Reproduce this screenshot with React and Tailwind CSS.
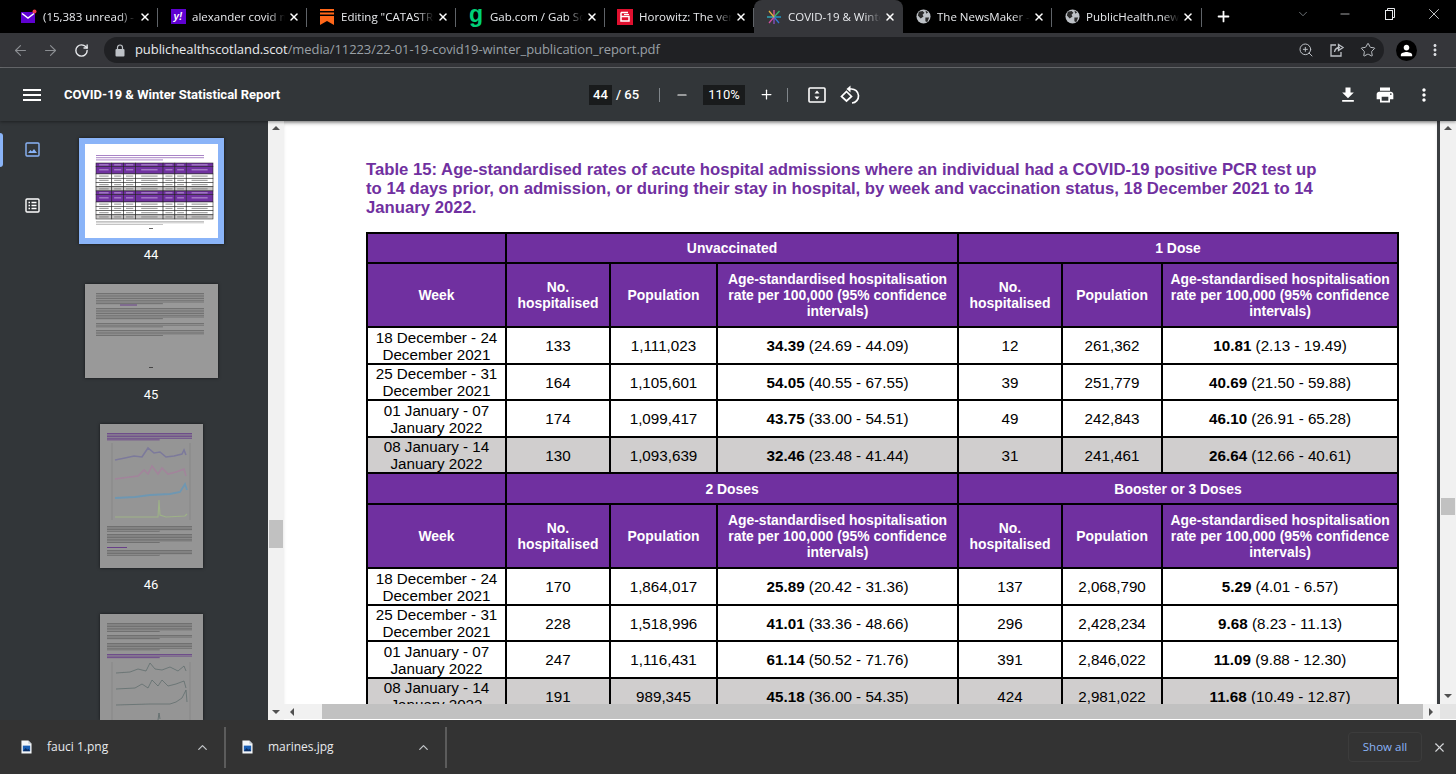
import { ArrowLeft, ArrowRight, ChevronDown, ChevronUp, Minus, Plus, RotateCw, Star, X, ZoomIn } from "lucide-react";
import { MdFileDownload, MdMenu, MdMoreVert, MdPrint, MdPerson } from "react-icons/md";

const SANS = "font-['Open_Sans','Noto_Sans',sans-serif]";

function MailIcon() {
  return (
    <svg width="16" height="16" viewBox="0 0 16 16">
      <rect x="0" y="3" width="14" height="11" fill="#5f01d1" />
      <path d="M1 4.5 L7 9 L13 4.5" fill="none" stroke="#fff" strokeWidth="1.4" />
      <circle cx="13.5" cy="2.5" r="2" fill="#f0384a" />
    </svg>
  );
}

function YahooIcon() {
  return (
    <div className="w-[15px] h-[15px] bg-[#5f01d1] flex items-center justify-center text-white text-[10px] font-bold italic leading-none font-['Liberation_Sans',sans-serif]">
      y!
    </div>
  );
}

function SubstackIcon() {
  return (
    <svg width="16" height="16" viewBox="0 0 16 16">
      <rect x="1" y="0" width="14" height="2" fill="#ff6719" />
      <rect x="1" y="3.5" width="14" height="2" fill="#ff6719" />
      <path d="M1 7 H15 V16 L8 12 L1 16 Z" fill="#ff6719" />
    </svg>
  );
}

function GabIcon() {
  return <div className="w-[15px] text-center text-[#00d178] text-[23px] font-bold leading-[16px] pb-[5px] font-['Liberation_Sans',sans-serif]">g</div>;
}

function HorowitzIcon() {
  return (
    <svg width="16" height="16" viewBox="0 0 16 16">
      <rect width="16" height="16" fill="#e0102f" />
      <path d="M4 3.5 H11 M4 3.5 V12 H12 V7.5 H4" fill="none" stroke="#fff" strokeWidth="1.5" />
      <path d="M7 5.5 H12" stroke="#fff" strokeWidth="1.2" />
    </svg>
  );
}

function SparkIcon() {
  const spokes = [
    ["#e05a9a", 8, 1, 8, 8], ["#38b36b", 13.5, 2, 8, 8], ["#1ea4d8", 15, 8, 8, 8], ["#3577d4", 13, 14, 8, 8],
    ["#8a4fc7", 8, 15, 8, 8], ["#d04f9c", 3, 14, 8, 8], ["#2fb9c9", 1, 8, 8, 8], ["#e2b23c", 3, 2, 8, 8],
  ];
  return (
    <svg width="16" height="16" viewBox="0 0 16 16">
      {spokes.map((s, i) => <line key={i} x1={s[1]} y1={s[2]} x2={s[3]} y2={s[4]} stroke={s[0]} strokeWidth="1.3" />)}
    </svg>
  );
}

function GlobeIcon() {
  return (
    <svg width="15" height="15" viewBox="0 0 16 16">
      <circle cx="8" cy="8" r="7.5" fill="#bdc1c6" />
      <path d="M3 3 L7 2 L9 4 L7 6 L8 8 L5 10 L2 7 Z M10 9 L14 9 L12 14 L10 13 Z M10 1.5 L13 3.5 L11 5 Z" fill="#2a2a2a" />
    </svg>
  );
}

const tabs = [
  { icon: <MailIcon />, title: "(15,383 unread) - alexander" },
  { icon: <YahooIcon />, title: "alexander covid new" },
  { icon: <SubstackIcon />, title: 'Editing "CATASTROPHE' },
  { icon: <GabIcon />, title: "Gab.com / Gab Social" },
  { icon: <HorowitzIcon />, title: "Horowitz: The very" },
  { icon: <SparkIcon />, title: "COVID-19 & Winter", active: true },
  { icon: <GlobeIcon />, title: "The NewsMaker - the" },
  { icon: <GlobeIcon />, title: "PublicHealth.news" },
];

function Tab({ icon, title, active, last }) {
  return (
    <div className={`relative w-[149px] h-[33px] flex items-center pl-3 pr-[7px] ${active ? "bg-[#35363a] rounded-t-lg" : ""}`}>
      <div className="w-[16px] flex items-center justify-center shrink-0">{icon}</div>
      <div className={`${SANS} ml-[6px] flex-1 overflow-hidden whitespace-nowrap text-[11.5px] text-[#e8eaed] [mask-image:linear-gradient(to_right,black_82%,transparent)]`}>{title}</div>
      <X size={12} strokeWidth={3} className="text-white ml-[3px] shrink-0" />
      {!active && !last && <div className="absolute right-0 top-[8px] w-px h-[19px] bg-[#5f6368]" />}
    </div>
  );
}

function ShareIcon() {
  return (
    <svg width="16" height="16" viewBox="0 0 16 16" fill="none" stroke="#bdc1c6" strokeWidth="1.3">
      <path d="M7 3 H2 V14 H12 V10" />
      <path d="M5.5 10 C6 7 8 5.5 11 5.5 M9.5 2.5 L14 5.5 L9.5 8.5 Z" />
    </svg>
  );
}

function RestoreIcon() {
  return (
    <svg width="12" height="12" viewBox="0 0 12 12" fill="none" stroke="#e8eaed" strokeWidth="1">
      <rect x="1.5" y="2.5" width="7" height="9" />
      <path d="M3.5 2.5 V0.5 H10.5 V9.5 H8.5" />
    </svg>
  );
}

function LockIcon() {
  return (
    <svg width="10" height="13" viewBox="0 0 10 13">
      <path d="M2.5 5 V3.5 a2.5 2.5 0 0 1 5 0 V5" fill="none" stroke="#bdc1c6" strokeWidth="1.2" />
      <rect x="0.5" y="5" width="9" height="7.5" rx="1" fill="#bdc1c6" />
    </svg>
  );
}

function FitIcon() {
  return (
    <svg width="18" height="16" viewBox="0 0 18 16">
      <rect x="1" y="1" width="16" height="14" rx="1" fill="none" stroke="#fff" strokeWidth="1.6" />
      <path d="M9 3.5 L11.5 6.5 H6.5 Z M9 12.5 L11.5 9.5 H6.5 Z" fill="#fff" />
    </svg>
  );
}

function RotateIcon() {
  return (
    <svg width="20" height="20" viewBox="0 0 20 20" fill="none" stroke="#fff" strokeWidth="1.7">
      <path d="M6.5 6.5 L11.5 11.5 L6.5 16 L1.5 11.5 Z" />
      <path d="M8.5 4 H11 A7 7 0 0 1 12 18" />
      <path d="M10.5 0.5 L6.5 4 L10.5 7.5 Z" fill="#fff" stroke="none" />
    </svg>
  );
}

function ThumbsIcon() {
  return (
    <svg width="15" height="15" viewBox="0 0 15 15">
      <rect x="1" y="1" width="13" height="13" rx="1" fill="none" stroke="#8ab4f8" strokeWidth="1.4" />
      <path d="M3 11 L5.5 8 L7 9.5 L9 7 L12 11 Z" fill="#8ab4f8" />
    </svg>
  );
}

function OutlineIcon() {
  return (
    <svg width="15" height="15" viewBox="0 0 15 15">
      <rect x="1" y="1" width="13" height="13" rx="1" fill="none" stroke="#fff" strokeWidth="1.4" />
      <path d="M3.5 4.5 H5 M3.5 7.5 H5 M3.5 10.5 H5 M6.5 4.5 H11.5 M6.5 7.5 H11.5 M6.5 10.5 H11.5" stroke="#fff" strokeWidth="1.4" />
    </svg>
  );
}

function FileIcon() {
  return (
    <svg width="11" height="14" viewBox="0 0 12 15">
      <path d="M0.5 0.5 H8 L11.5 4 V14.5 H0.5 Z" fill="#f4f6f8" />
      <path d="M8 0.5 V4 H11.5 Z" fill="#c5cdd6" />
      <rect x="2" y="6" width="8" height="6" fill="#1a5fb4" />
      <path d="M2 12 L5 8.5 L7 10.5 L8 9.5 L10 12 Z" fill="#0b2f66" />
    </svg>
  );
}

// page thumbnails: drawn miniatures, the pages are unreadable at this size
function Soft({ children }) {
  return (
    <>
      <filter id="soft"><feGaussianBlur stdDeviation="0.4" /></filter>
      <g filter="url(#soft)">{children}</g>
    </>
  );
}

function Lines({ x, y, w, n, gap = 1.7, color = "#333", h = 0.9, opacity = 0.42 }) {
  return Array.from({ length: n }).map((_, i) => (
    <rect key={i} x={x} y={y + i * gap} width={i === n - 1 ? w * 0.62 : w} height={h} fill={color} opacity={opacity} />
  ));
}

const colWidths = [139, 104, 107, 241, 104, 100, 236];
const miniRows = [30, 64, 37, 36, 37, 36, 31, 64, 37, 36, 37, 36];

function MiniTable() {
  const sx = 117 / 1031;
  const sy = 56 / 481;
  let ty = 19;
  return (
    <g>
      {miniRows.map((rh, r) => {
        const purple = r === 0 || r === 1 || r === 6 || r === 7;
        const grey = r === 5 || r === 11;
        let tx = 11;
        const y = ty;
        ty += rh * sy;
        return colWidths.map((cw, c) => {
          const x = tx;
          tx += cw * sx;
          return (
            <g key={`${r}-${c}`}>
              <rect x={x} y={y} width={cw * sx} height={rh * sy} fill={purple ? "#7030a0" : grey ? "#c9c7c7" : "#fff"} stroke="#222" strokeWidth="0.55" />
              <rect x={x + cw * sx * 0.2} y={y + rh * sy * 0.36} width={cw * sx * 0.6} height="1.2" fill={purple ? "#c9b0e0" : "#777"} opacity="0.7" />
            </g>
          );
        });
      })}
    </g>
  );
}

function Thumb44() {
  return (
    <svg width="133" height="94" viewBox="0 0 133 94" className="block">
      <rect width="133" height="94" fill="#fff" />
      <Soft>
        <Lines x={11} y={11} w={108} n={3} gap={2.2} h={1} color="#7030a0" opacity={0.6} />
        <MiniTable />
        <Lines x={11} y={77} w={108} n={3} gap={1.5} h={0.7} color="#555" opacity={0.5} />
        <rect x={64} y={84} width={4} height={1} fill="#666" />
      </Soft>
    </svg>
  );
}

function Thumb45() {
  return (
    <svg width="133" height="94" viewBox="0 0 133 94" className="block">
      <rect width="133" height="94" fill="#999" />
      <Soft>
        <Lines x={11} y={9} w={108} n={7} />
        <rect x={35} y={20.5} width={17} height={1} fill="#5c2a86" opacity="0.8" />
        <Lines x={11} y={24} w={108} n={7} />
        <Lines x={11} y={39} w={108} n={3} />
        <Lines x={11} y={46} w={108} n={4} />
        <rect x={64} y={83} width={4} height={1} fill="#444" />
      </Soft>
    </svg>
  );
}

function Thumb46() {
  return (
    <svg width="103" height="144" viewBox="0 0 103 144" className="block">
      <rect width="103" height="144" fill="#959595" />
      <Soft>
        <Lines x={7} y={9} w={85} n={5} gap={1.6} color="#5c2a86" opacity={0.75} />
        <path d="M12 19 V96 M90 19 V96" stroke="#808080" strokeWidth="0.6" />
        <polyline points="15,36 25,34 34,32 42,33 48,24 54,29 60,28 66,33 74,32 82,30 84,26 86,31" fill="none" stroke="#77739c" strokeWidth="1.6" opacity="0.8" />
        <polyline points="15,55 30,53 38,52 44,46 48,50 52,42 58,50 62,44 68,50 76,48 84,45 86,52" fill="none" stroke="#a5809c" strokeWidth="1.6" opacity="0.8" />
        <polyline points="15,74 35,73 50,71 70,70 80,68 85,60 87,66" fill="none" stroke="#6a97b5" strokeWidth="1.8" opacity="0.9" />
        <polyline points="15,93 58,93 59,76 60,91 66,93 85,92 87,90" fill="none" stroke="#9fb585" strokeWidth="1.1" opacity="0.9" />
        <Lines x={7} y={102} w={85} n={4} gap={1.6} />
        <Lines x={7} y={110} w={85} n={6} gap={1.6} />
        <rect x={7} y={123} width={20} height={1} fill="#5c2a86" opacity="0.8" />
        <Lines x={7} y={126} w={85} n={4} gap={1.6} />
      </Soft>
    </svg>
  );
}

function Thumb47() {
  return (
    <svg width="103" height="106" viewBox="0 0 103 106" className="block">
      <rect width="103" height="106" fill="#959595" />
      <Soft>
        <Lines x={7} y={9} w={85} n={6} gap={1.6} />
        <Lines x={7} y={21} w={85} n={3} gap={1.6} />
        <Lines x={7} y={29} w={85} n={5} gap={1.6} />
        <Lines x={7} y={40} w={85} n={3} gap={1.6} color="#5c2a86" opacity={0.75} />
        <path d="M12 48 V106 M90 48 V106" stroke="#808080" strokeWidth="0.6" />
        <polyline points="16,59 30,58 38,55 46,57 50,49 55,55 62,56 70,53 78,57 84,52 86,57" fill="none" stroke="#5c6a6a" strokeWidth="0.9" opacity="0.8" />
        <polyline points="16,75 35,74 42,70 48,74 52,66 58,72 62,66 68,72 76,70 84,67 86,74" fill="none" stroke="#5c6a6a" strokeWidth="0.9" opacity="0.8" />
        <polyline points="16,91 50,90 70,90 76,88 82,84 86,76 87,88" fill="none" stroke="#5c6a6a" strokeWidth="0.9" opacity="0.8" />
        <polyline points="58,106 59,99 60,105" fill="none" stroke="#5c6a6a" strokeWidth="0.8" />
      </Soft>
    </svg>
  );
}

function ThumbLabel({ children }) {
  return <div className="text-center text-white text-[13px] font-['Roboto',sans-serif] leading-[16px]">{children}</div>;
}

function Sidebar() {
  return (
    <div className="relative w-[268px] shrink-0 bg-[#323639] overflow-hidden flex">
      <div className="absolute left-0 top-[12px] w-[3px] h-[34px] bg-[#8ab4f8] rounded-r" />
      <div className="w-[64px] shrink-0 flex flex-col items-center gap-[41px] pt-[21px]">
        <ThumbsIcon />
        <OutlineIcon />
      </div>
      <div className="flex-1 flex flex-col items-center pt-[17px] pr-[30px]">
        <div className="border-[6px] border-[#8ab4f8] shadow-[0_0_3px_rgba(0,0,0,.6)]"><Thumb44 /></div>
        <div className="mt-[3px]"><ThumbLabel>44</ThumbLabel></div>
        <div className="mt-[21px] shadow-[0_0_3px_rgba(0,0,0,.6)]"><Thumb45 /></div>
        <div className="mt-[9px]"><ThumbLabel>45</ThumbLabel></div>
        <div className="mt-[21px] shadow-[0_0_3px_rgba(0,0,0,.6)]"><Thumb46 /></div>
        <div className="mt-[9px]"><ThumbLabel>46</ThumbLabel></div>
        <div className="mt-[21px] shadow-[0_0_3px_rgba(0,0,0,.6)]"><Thumb47 /></div>
      </div>
    </div>
  );
}

function Arrow({ dir }) {
  const cls = {
    up: "border-x-[4px] border-x-transparent border-b-[4px] border-b-[#505050]",
    down: "border-x-[4px] border-x-transparent border-t-[4px] border-t-[#505050]",
    left: "border-y-[4px] border-y-transparent border-r-[4px] border-r-[#505050]",
    right: "border-y-[4px] border-y-transparent border-l-[4px] border-l-[#505050]",
  };
  return <div className={`w-0 h-0 ${cls[dir]}`} />;
}

function VScroll({ thumb }) {
  return (
    <div className="w-[16px] shrink-0 bg-[#f1f1f1] flex flex-col items-center">
      <div className="h-[16px] pt-[5px] shrink-0"><Arrow dir="up" /></div>
      <div className="flex-1 w-full px-[1px]">
        <div className="bg-[#c1c1c1] w-full" style={{ marginTop: thumb.top, height: thumb.height }} />
      </div>
      <div className="h-[16px] pt-[6px] shrink-0"><Arrow dir="down" /></div>
    </div>
  );
}

const head = ["No. hospitalised", "Population", "Age-standardised hospitalisation rate per 100,000 (95% confidence intervals)"];

const weeks = ["18 December - 24 December 2021", "25 December - 31 December 2021", "01 January - 07 January 2022", "08 January - 14 January 2022"];

const sectionA = {
  titles: ["Unvaccinated", "1 Dose"],
  rows: [
    ["133", "1,111,023", "34.39", "(24.69 - 44.09)", "12", "261,362", "10.81", "(2.13 - 19.49)"],
    ["164", "1,105,601", "54.05", "(40.55 - 67.55)", "39", "251,779", "40.69", "(21.50 - 59.88)"],
    ["174", "1,099,417", "43.75", "(33.00 - 54.51)", "49", "242,843", "46.10", "(26.91 - 65.28)"],
    ["130", "1,093,639", "32.46", "(23.48 - 41.44)", "31", "241,461", "26.64", "(12.66 - 40.61)"],
  ],
};

const sectionB = {
  titles: ["2 Doses", "Booster or 3 Doses"],
  rows: [
    ["170", "1,864,017", "25.89", "(20.42 - 31.36)", "137", "2,068,790", "5.29", "(4.01 - 6.57)"],
    ["228", "1,518,996", "41.01", "(33.36 - 48.66)", "296", "2,428,234", "9.68", "(8.23 - 11.13)"],
    ["247", "1,116,431", "61.14", "(50.52 - 71.76)", "391", "2,846,022", "11.09", "(9.88 - 12.30)"],
    ["191", "989,345", "45.18", "(36.00 - 54.35)", "424", "2,981,022", "11.68", "(10.49 - 12.87)"],
  ],
};

const cell = "border-2 border-black text-center align-middle p-0";
const hcell = `${cell} bg-[#7030a0] text-white font-bold text-[13.9px] leading-[16px]`;
const rowHeights = ["h-[37px]", "h-[36px]", "h-[37px]", "h-[36px]"];

function Section({ data, first }) {
  return (
    <>
      <tr className={first ? "h-[30px]" : "h-[31px]"}>
        <td className={hcell}></td>
        <td className={hcell} colSpan={3}>{data.titles[0]}</td>
        <td className={hcell} colSpan={3}>{data.titles[1]}</td>
      </tr>
      <tr className="h-[64px]">
        <td className={hcell}>Week</td>
        {[...head, ...head].map((h, i) => (
          <td key={i} className={`${hcell} px-1`}>{h}</td>
        ))}
      </tr>
      {data.rows.map((r, i) => {
        const grey = i === 3 ? "bg-[#d0cece]" : "bg-white";
        return (
          <tr key={i} className={rowHeights[i]}>
            <td className={`${cell} ${grey} px-1`}>{weeks[i]}</td>
            <td className={`${cell} ${grey}`}>{r[0]}</td>
            <td className={`${cell} ${grey}`}>{r[1]}</td>
            <td className={`${cell} ${grey}`}><b>{r[2]}</b> {r[3]}</td>
            <td className={`${cell} ${grey}`}>{r[4]}</td>
            <td className={`${cell} ${grey}`}>{r[5]}</td>
            <td className={`${cell} ${grey}`}><b>{r[6]}</b> {r[7]}</td>
          </tr>
        );
      })}
    </>
  );
}

function PdfPage() {
  return (
    <div className="flex-1 bg-white overflow-hidden pl-[82px] pt-[39px] font-['Liberation_Sans',sans-serif] shadow-[inset_0_4px_4px_-2px_rgba(0,0,0,.25)]">
      <h1 className="w-[955px] text-[16.7px] leading-[19px] font-bold text-[#7030a0] mb-[15px]">
        Table 15: Age-standardised rates of acute hospital admissions where an individual had a COVID-19 positive PCR test up to 14 days prior, on admission, or during their stay in hospital, by week and vaccination status, 18 December 2021 to 14 January 2022.
      </h1>
      <table className="table-fixed border-collapse w-[1031px] text-[15.2px] leading-[17px] text-black">
        <colgroup>
          {colWidths.map((w, i) => <col key={i} style={{ width: w }} />)}
        </colgroup>
        <tbody>
          <Section data={sectionA} first />
          <Section data={sectionB} />
        </tbody>
      </table>
    </div>
  );
}

function ToolBtn({ children, className = "" }) {
  return <div className={`flex items-center justify-center ${className}`}>{children}</div>;
}

function Download({ name, className, pad }) {
  return (
    <div className={`flex items-center h-[54px] relative ${className}`}>
      <div className={pad}><FileIcon /></div>
      <div className={`${SANS} ml-[15px] text-[12px] text-[#e8eaed]`}>{name}</div>
      <ChevronUp size={15} strokeWidth={2} className="absolute right-[16px] top-[20px] text-[#c4c7ca]" />
      <div className="absolute right-0 top-[7px] w-[2px] h-[41px] bg-[#5c5c5c]" />
    </div>
  );
}

export default function App() {
  return (
    <div className="w-[1456px] h-[774px] overflow-hidden flex flex-col bg-[#323639]">
      {/* tab strip */}
      <div className="h-[33px] bg-black flex shrink-0 pl-[9px]">
        {tabs.map((t, i) => <Tab key={i} {...t} last={i === tabs.length - 1} />)}
        <div className="w-px h-[19px] mt-[8px] bg-[#5f6368]" />
        <Plus size={17} strokeWidth={2.5} className="text-white ml-[13px] mt-[8px]" />
        <div className="ml-auto flex items-start text-[#e8eaed]">
          <ChevronDown size={14} strokeWidth={1.2} className="mt-[7px] mr-[28px] text-[#9aa0a6]" />
          <Minus size={14} strokeWidth={1.2} className="mt-[7px] mr-[32px]" />
          <div className="mt-[8px] mr-[29px]"><RestoreIcon /></div>
          <X size={18} strokeWidth={1.1} className="mt-[5px] mr-[13px]" />
        </div>
      </div>

      {/* address bar */}
      <div className="h-[35px] bg-[#35363a] border-b border-[#6a6c6f] flex items-center shrink-0">
        <ArrowLeft size={17} strokeWidth={1.6} className="ml-[12px] text-[#8b8e92]" />
        <ArrowRight size={17} strokeWidth={1.6} className="ml-[13px] text-[#8b8e92]" />
        <RotateCw size={15} strokeWidth={2.2} className="ml-[15px] text-[#e8eaed]" />
        <div className="ml-[15px] w-[1280px] h-[26px] rounded-full bg-[#202124] flex items-center">
          <div className="ml-[11px]"><LockIcon /></div>
          <div className={`${SANS} ml-[10px] text-[13px] tracking-[-0.08px] whitespace-nowrap text-[#9aa0a6]`}>
            <span className="text-[#e8eaed]">publichealthscotland.scot</span>/media/11223/22-01-19-covid19-winter_publication_report.pdf
          </div>
          <div className="ml-auto flex items-center gap-[15px] pr-[8px]">
            <ZoomIn size={16} strokeWidth={1.5} className="text-[#bdc1c6]" />
            <ShareIcon />
            <Star size={16} strokeWidth={1.5} className="text-[#bdc1c6]" />
          </div>
        </div>
        <div className="ml-[12px] w-[21px] h-[21px] rounded-full bg-black flex items-center justify-center">
          <MdPerson size={17} className="text-white" />
        </div>
        <MdMoreVert size={18} className="ml-[9px] text-[#dadce0]" />
      </div>

      {/* pdf viewer toolbar */}
      <div className="h-[53px] bg-[#323639] flex items-center shrink-0 text-white font-['Roboto',sans-serif] relative z-10 shadow-[0_1px_3px_rgba(0,0,0,.4)]">
        <MdMenu size={24} className="ml-[20px]" />
        <div className="ml-[20px] w-[525px] text-[13px] font-bold">COVID-19 &amp; Winter Statistical Report</div>
        <div className="w-[23px] h-[20px] bg-[#191b1c] text-center text-[13px] font-medium leading-[20px]">44</div>
        <div className="ml-[4px] text-[13px] font-medium w-[23px] text-center whitespace-nowrap">/ 65</div>
        <div className="ml-[20px] w-px h-[14px] bg-[#80868b]" />
        <ToolBtn className="ml-[15px]"><Minus size={14} strokeWidth={2} /></ToolBtn>
        <div className="ml-[14px] w-[42px] h-[20px] bg-[#191b1c] text-center text-[13px] leading-[20px]">110%</div>
        <ToolBtn className="ml-[14px]"><Plus size={15} strokeWidth={2} /></ToolBtn>
        <div className="ml-[13px] w-px h-[14px] bg-[#80868b]" />
        <ToolBtn className="ml-[20px]"><FitIcon /></ToolBtn>
        <ToolBtn className="ml-[14px]"><RotateIcon /></ToolBtn>
        <div className="ml-auto flex items-center">
          <MdFileDownload size={20} />
          <MdPrint size={20} className="ml-[17px]" />
          <MdMoreVert size={20} className="ml-[19px] mr-[22px]" />
        </div>
      </div>

      {/* viewer */}
      <div className="h-[599px] flex shrink-0">
        <Sidebar />
        <VScroll thumb={{ top: 383, height: 28 }} />
        <div className="flex-1 flex flex-col min-w-0">
          <div className="h-[583px] flex">
            <PdfPage />
            <div className="w-[3px] bg-[#3a3d40]" />
            <VScroll thumb={{ top: 361, height: 17 }} />
          </div>
          <div className="h-[16px] bg-[#f1f1f1] flex items-center border-b border-white">
            <div className="w-[38px] pl-[6px] shrink-0"><Arrow dir="left" /></div>
            <div className="w-[1101px] h-[15px] bg-[#c1c1c1]" />
            <div className="ml-[6px]"><Arrow dir="right" /></div>
            <div className="ml-auto w-[16px] h-full bg-[#e4e4e4]" />
          </div>
        </div>
      </div>

      {/* downloads shelf */}
      <div className="h-[54px] bg-[#333333] flex items-center shrink-0">
        <Download name="fauci 1.png" className="w-[226px]" pad="pl-[21px]" />
        <Download name="marines.jpg" className="w-[221px]" pad="pl-[16px]" />
        <div className={`${SANS} ml-auto w-[74px] h-[30px] rounded border border-[#3c3c3c] text-[#8ab4f8] text-[11.5px] font-medium flex items-center justify-center`}>Show all</div>
        <X size={15} strokeWidth={1.8} className="ml-[10px] mr-[9px] text-[#d5d7da]" />
      </div>
    </div>
  );
}
